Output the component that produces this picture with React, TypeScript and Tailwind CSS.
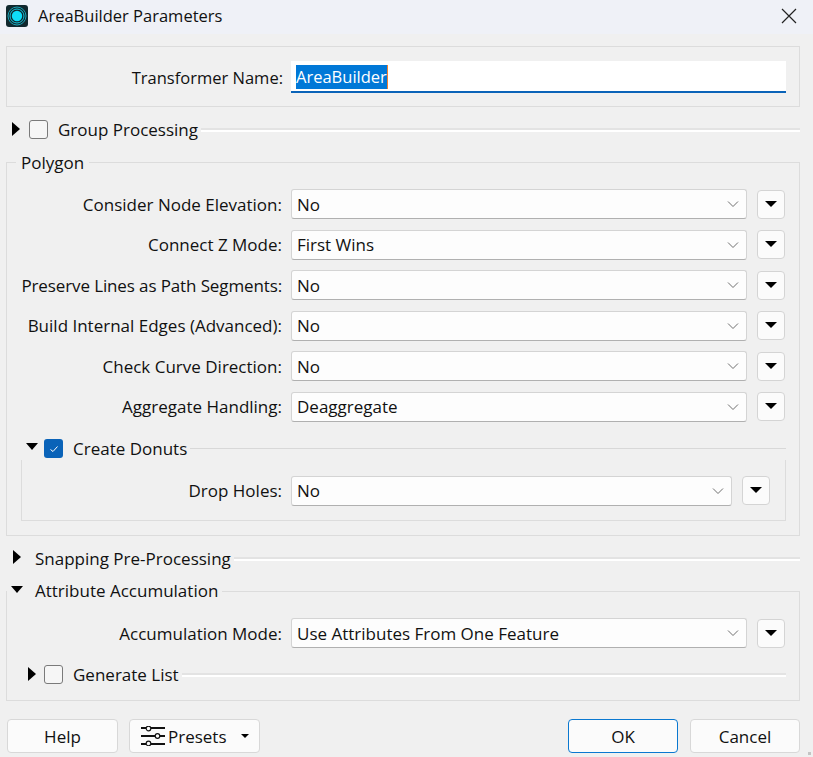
import type { ReactNode } from 'react'

const font = 'font-["Open_Sans","Noto_Sans",sans-serif]'

function TriRight() {
  return <span className="block w-0 h-0 border-y-[7px] border-y-transparent border-l-[8px] border-l-black" />
}

function TriDown() {
  return <span className="block w-0 h-0 border-x-[6px] border-x-transparent border-t-[7px] border-t-black" />
}

function Checkbox({ checked = false }: { checked?: boolean }) {
  if (checked) {
    return (
      <span className="w-[19px] h-[19px] shrink-0 rounded-[3px] bg-[#0a63b8] flex items-center justify-center">
        <svg width="10" height="10" viewBox="0 0 10 10" fill="none" stroke="#fff" strokeWidth="1">
          <path d="M1.5 5.5 L4 7.5 L8.5 2.5" />
        </svg>
      </span>
    )
  }
  return <span className="block w-[19px] h-[19px] shrink-0 rounded-[3px] border border-[#7a7a7a] bg-[#f6f6f6]" />
}

// the double rule used by collapsed groups
function Rule() {
  return (
    <div className="flex-1 flex flex-col">
      <div className="h-[2px] bg-[#e3e3e3]" />
      <div className="h-[2px] bg-white" />
    </div>
  )
}

function ParamRow({ label, value, inner = false, labelClass = '' }: { label: string; value: string; inner?: boolean; labelClass?: string }) {
  return (
    <div className="flex items-center h-[30px]">
      <div className={`text-right whitespace-nowrap pr-[9px] pt-[1px] ${inner ? 'w-[269px]' : 'w-[284px]'} ${labelClass}`}>{label}</div>
      <div className={`h-[30px] flex items-center justify-between bg-[#fdfdfd] border border-[#d4d4d4] border-b-[#b0b0b0] rounded-[3px] pl-[5px] pr-[7px] ${inner ? 'w-[441px]' : 'w-[456px]'}`}>
        <span className="pt-[1px]">{value}</span>
        <svg width="12" height="8" viewBox="0 0 12 8" fill="none" stroke="#6f6f6f" strokeWidth="1">
          <path d="M1 1.5 L6 6.5 L11 1.5" />
        </svg>
      </div>
      <div className="ml-[10px] w-[28px] h-[29px] flex items-start justify-center pt-[10px] bg-[#fbfbfb] border border-[#d4d4d4] rounded-[4px]">
        <span className="w-0 h-0 border-x-[6px] border-x-transparent border-t-[6px] border-t-black" />
      </div>
    </div>
  )
}

function Btn({ children, className = '' }: { children: ReactNode; className?: string }) {
  return (
    <div className={`h-[34px] pt-[1px] flex items-center justify-center bg-[#fbfbfb] border rounded-[4px] ${className}`}>
      {children}
    </div>
  )
}

export default function App() {
  return (
    <div className={`${font} relative w-[813px] h-[757px] overflow-hidden bg-[#f0f0f0] text-[#111] text-[17px] leading-[22px]`}>
      {/* Title bar */}
      <div className="h-[34px] bg-[#eff1f7] flex items-center pl-[6px]">
        <svg width="22" height="24" viewBox="0 0 22 24" className="mb-[2px]">
          <rect x="0" y="1" width="22" height="22" rx="3" fill="#10282e" />
          <circle cx="11" cy="12" r="9" fill="none" stroke="#1aa5b8" strokeWidth="1" />
          <circle cx="11" cy="12" r="7" fill="none" stroke="#14c4dc" strokeWidth="1" />
          <circle cx="11" cy="12" r="5.2" fill="#0fdcf8" />
        </svg>
        <span className="ml-[10px] mb-[3px] text-[16.5px]">AreaBuilder Parameters</span>
        <svg width="16" height="16" viewBox="0 0 16 16" className="ml-auto mr-[16px] mb-[3px]" stroke="#222" strokeWidth="1.2">
          <path d="M1 1 L15 15 M15 1 L1 15" />
        </svg>
      </div>

      <div className="px-[6px] pt-[12px] w-[806px]">
        {/* Transformer name */}
        <div className="h-[61px] border border-[#dcdcdc] flex items-center">
          <div className="w-[276px] text-right mt-[2px] text-[16.5px]">Transformer Name:</div>
          <div className="ml-[8px] w-[495px] h-[32px] mt-[1px] bg-white border-b-2 border-[#0a63b8] pl-[5px] flex items-center">
            <span className="bg-[#0078d7] text-white text-[16.5px] leading-[24px] mt-[2px] border-r border-r-[#f08030]">AreaBuilder</span>
          </div>
        </div>

        {/* Group Processing */}
        <div className="h-[22px] mt-[12px] flex items-center">
          <div className="w-[8px] ml-[6px] mb-[3px]"><TriRight /></div>
          <div className="ml-[9px] mb-[2px]"><Checkbox /></div>
          <span className="ml-[10px] mr-[3px]">Group Processing</span>
          <Rule />
        </div>

        {/* Polygon */}
        <div className="mt-[21px] h-[374px] border border-[#dcdcdc] relative pt-[26px]">
          <span className="absolute left-[9px] top-[-11px] px-[5px] bg-[#f0f0f0]">Polygon</span>
          <div className="flex flex-col gap-[10.5px]">
            <ParamRow label="Consider Node Elevation:" value="No" />
            <ParamRow label="Connect Z Mode:" value="First Wins" />
            <ParamRow label="Preserve Lines as Path Segments:" value="No" labelClass="tracking-[-0.12px]" />
            <ParamRow label="Build Internal Edges (Advanced):" value="No" />
            <ParamRow label="Check Curve Direction:" value="No" />
            <ParamRow label="Aggregate Handling:" value="Deaggregate" />
          </div>

          {/* Create Donuts */}
          <div className="mt-[16px] ml-[14px] w-[765px]">
            <div className="h-[22px] flex items-center">
              <div className="ml-[5px] w-[12px] mb-[4px]"><TriDown /></div>
              <div className="ml-[6px]"><Checkbox checked /></div>
              <span className="ml-[10px] mr-[3px]">Create Donuts</span>
              <div className="flex-1 h-px bg-[#d8d8d8]" />
            </div>
            <div className="h-[61px] border border-t-0 border-[#dcdcdc] pt-[16px]">
              <ParamRow inner label="Drop Holes:" value="No" />
            </div>
          </div>
        </div>

        {/* Snapping */}
        <div className="h-[22px] mt-[12px] flex items-center">
          <div className="w-[8px] ml-[7px] mb-[4px]"><TriRight /></div>
          <span className="ml-[14px] mr-[3px]">Snapping Pre-Processing</span>
          <Rule />
        </div>

        {/* Attribute Accumulation */}
        <div className="mt-[21px] h-[110px] relative">
          <div className="h-[22px] flex items-center absolute left-0 right-0 top-[-11px]">
            <div className="ml-[5px] w-[12px] mb-[4px]"><TriDown /></div>
            <span className="ml-[12px] pr-[3px] bg-[#f0f0f0]">Attribute Accumulation</span>
          </div>
          <div className="h-full border border-[#dcdcdc] border-t-0 pt-[27px]">
            <div className="absolute top-0 left-[216px] right-0 h-px bg-[#dcdcdc]" />
            <ParamRow label="Accumulation Mode:" value="Use Attributes From One Feature" />
            <div className="h-[22px] mt-[16px] ml-[21px] w-[758px] flex items-center">
              <div className="w-[8px] mb-[2px]"><TriRight /></div>
              <div className="ml-[8px] mb-[2px]"><Checkbox /></div>
              <span className="ml-[10px] mr-[3px]">Generate List</span>
              <Rule />
            </div>
          </div>
        </div>

        {/* Footer buttons */}
        <div className="mt-[18px] flex">
          <Btn className="ml-px w-[111px] border-[#d8d8d8]">Help</Btn>
          <Btn className="ml-[11px] w-[131px] justify-start pl-[11px] border-[#d8d8d8]">
            <svg width="24" height="20" viewBox="0 0 24 20" fill="none" stroke="#111" className="mb-[2px]">
              <path d="M0 2 H5 M10 2 H24 M0 10 H14 M19 10 H24 M0 18 H5 M10 18 H24" strokeWidth="2" />
              <circle cx="7.5" cy="2.5" r="2.3" strokeWidth="1.2" />
              <circle cx="16.5" cy="10" r="2.3" strokeWidth="1.2" />
              <circle cx="7.5" cy="17.5" r="2.3" strokeWidth="1.2" />
            </svg>
            <span className="ml-[3px]">Presets</span>
            <span className="ml-[14px] mb-[2px] w-0 h-0 border-x-[4px] border-x-transparent border-t-[4px] border-t-black" />
          </Btn>
          <Btn className="ml-auto w-[110px] border-[#0a78d0]">OK</Btn>
          <Btn className="ml-[12px] w-[110px] border-[#d8d8d8]">Cancel</Btn>
        </div>
      </div>

      {/* resize grip */}
      <span className="absolute right-[2px] bottom-[2px] w-[3px] h-[3px] bg-[#c4c4c4]" />
    </div>
  )
}
